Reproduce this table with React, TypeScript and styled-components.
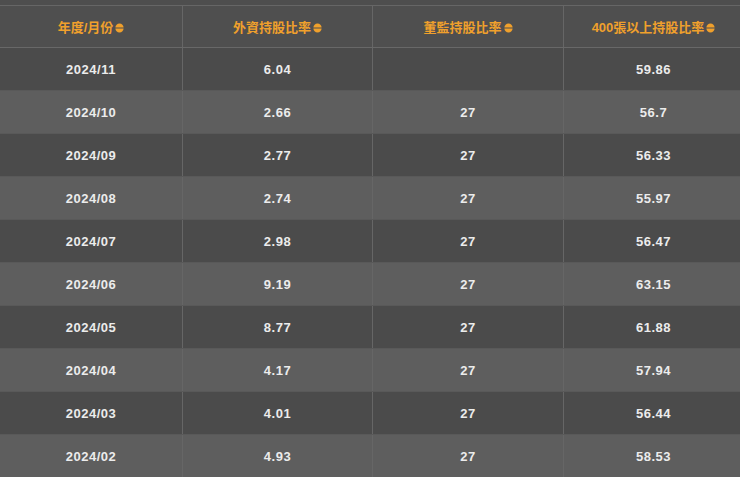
import styled, { createGlobalStyle } from 'styled-components'

interface IRow {
    month: string
    foreign: string
    director: string
    big: string
}

const rows: IRow[] = [
    { month: '2024/11', foreign: '6.04', director: '', big: '59.86' },
    { month: '2024/10', foreign: '2.66', director: '27', big: '56.7' },
    { month: '2024/09', foreign: '2.77', director: '27', big: '56.33' },
    { month: '2024/08', foreign: '2.74', director: '27', big: '55.97' },
    { month: '2024/07', foreign: '2.98', director: '27', big: '56.47' },
    { month: '2024/06', foreign: '9.19', director: '27', big: '63.15' },
    { month: '2024/05', foreign: '8.77', director: '27', big: '61.88' },
    { month: '2024/04', foreign: '4.17', director: '27', big: '57.94' },
    { month: '2024/03', foreign: '4.01', director: '27', big: '56.44' },
    { month: '2024/02', foreign: '4.93', director: '27', big: '58.53' },
]

const headers = ['年度/月份', '外資持股比率', '董監持股比率', '400張以上持股比率']

const GlobalStyle = createGlobalStyle`
    html, body {
        margin: 0;
        padding: 0;
        background: #4e4e4e;
        overflow: hidden;
    }
`

const SDiv_Page = styled.div`
    width: 740px;
    height: 477px;
    padding-top: 5px;
    box-sizing: border-box;
    background: #4e4e4e;
    overflow: hidden;
`

const STable = styled.table`
    width: 740px;
    border-collapse: collapse;
    table-layout: fixed;
    border-top: 1px solid #666;
    font-family: 'Liberation Sans', Arial, 'Noto Sans CJK TC', sans-serif;
`

const STh = styled.th<{ $w: number }>`
    width: ${(p) => p.$w}px;
    height: 41px;
    padding: 0;
    background: #4f4f4f;
    color: #f0a02c;
    font-size: 13px;
    font-weight: bold;
    text-align: center;
    border-left: 1px solid #666;
    border-bottom: 1px solid #686868;

    &:first-child {
        border-left: none;
    }
`

const STr = styled.tr<{ $light: boolean }>`
    background: ${(p) => (p.$light ? '#5e5e5e' : '#4b4b4b')};
`

const STd = styled.td`
    height: 42px;
    padding: 0;
    color: #ececec;
    font-size: 13px;
    font-weight: bold;
    letter-spacing: 0.5px;
    text-align: center;
    border-left: 1px solid #666;
    border-bottom: 1px solid #595959;

    &:first-child {
        border-left: none;
    }
`

const SSpan_Sort = styled.span`
    display: inline-block;
    margin-left: 2px;
    vertical-align: -1px;
`

const widths = [182, 189, 190, 179]

function SortIcon() {
    return (
        <SSpan_Sort>
            <svg width='9' height='10' viewBox='0 0 9 10'>
                <path d='M4.5 0.4 C6.8 0.4 8.6 2.6 8.6 4.4 H0.4 C0.4 2.6 2.2 0.4 4.5 0.4 Z' fill='#f0a02c' />
                <path d='M4.5 9.6 C6.8 9.6 8.6 7.4 8.6 5.6 H0.4 C0.4 7.4 2.2 9.6 4.5 9.6 Z' fill='#f0a02c' />
            </svg>
        </SSpan_Sort>
    )
}

export default function App() {
    return (
        <SDiv_Page>
            <GlobalStyle />
            <STable>
                <thead>
                    <tr>
                        {headers.map((h, i) => (
                            <STh key={h} $w={widths[i]}>
                                {h}
                                <SortIcon />
                            </STh>
                        ))}
                    </tr>
                </thead>
                <tbody>
                    {rows.map((r, i) => (
                        <STr key={r.month} $light={i % 2 === 1}>
                            <STd>{r.month}</STd>
                            <STd>{r.foreign}</STd>
                            <STd>{r.director}</STd>
                            <STd>{r.big}</STd>
                        </STr>
                    ))}
                </tbody>
            </STable>
        </SDiv_Page>
    )
}
